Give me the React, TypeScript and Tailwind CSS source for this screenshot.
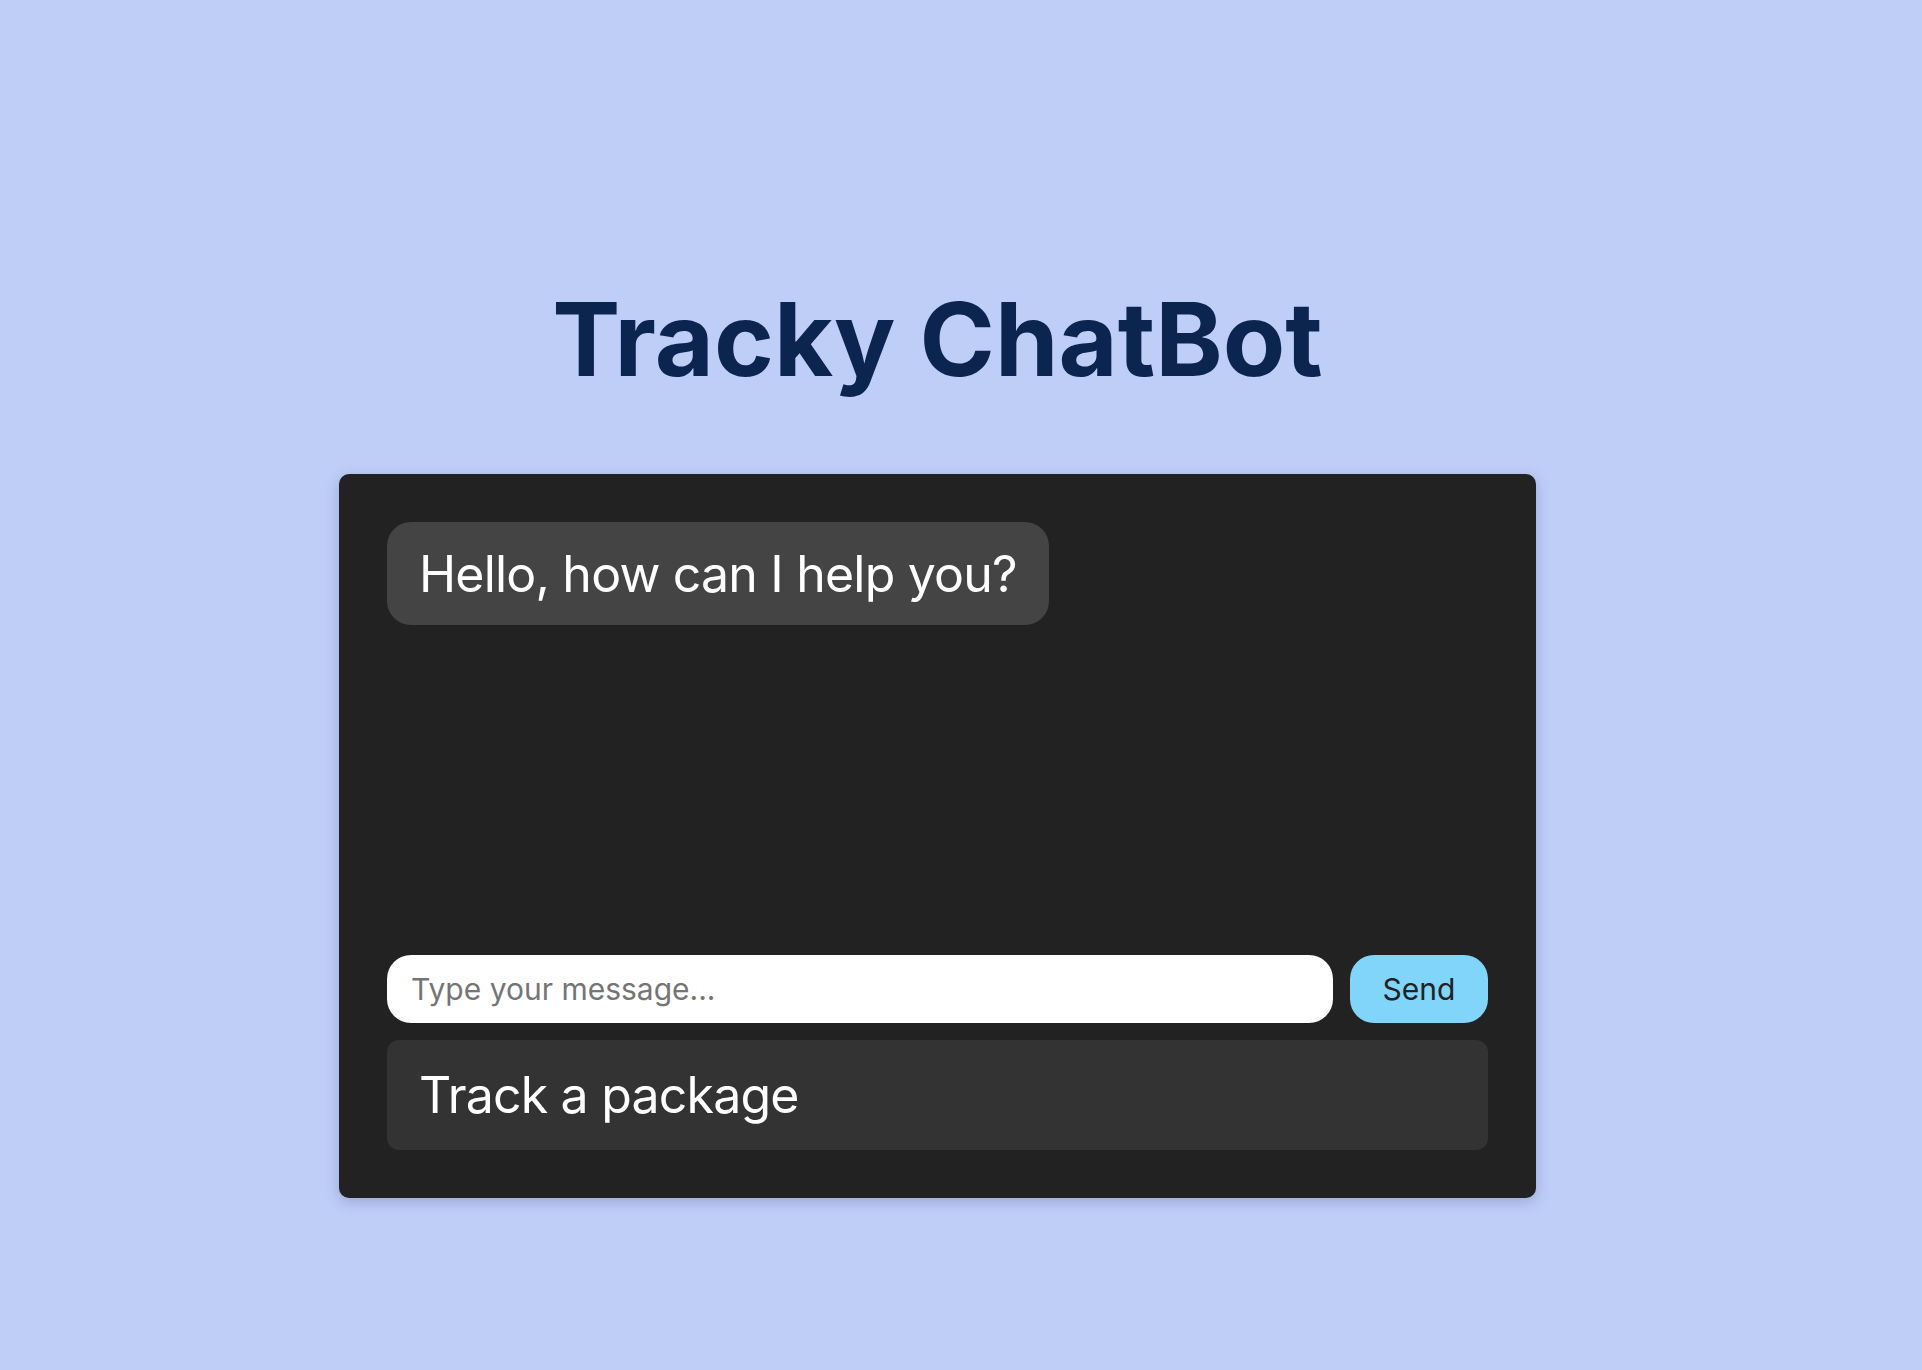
import React, { useState } from "react";

type Message = {
  id: number;
  text: string;
};

const initialMessages: Message[] = [{ id: 1, text: "Hello, how can I help you?" }];

const App: React.FC = () => {
  const [messages] = useState<Message[]>(initialMessages);
  const [input, setInput] = useState("");

  return (
    <div
      className="min-h-screen w-full bg-[#bfcef7] flex flex-col items-center pt-[288px] pr-[47px]"
      style={{ fontFamily: "Inter, 'Noto Sans', sans-serif" }}
    >
      <h1 className="text-[102px] leading-none font-bold text-[#0c2550] mb-[84px]">
        Tracky ChatBot
      </h1>

      <div className="w-[1197px] h-[724px] bg-[#222222] rounded-[10px] p-12 flex flex-col shadow-[0_4px_14px_rgba(40,60,120,0.25)]">
        <div className="flex-1 flex flex-col items-start">
          {messages.map((m) => (
            <div
              key={m.id}
              className="h-[103px] flex items-center px-8 rounded-3xl bg-[#444444] text-white text-[50px] leading-none tracking-[-0.016em]"
            >
              {m.text}
            </div>
          ))}
        </div>

        <div className="flex items-center gap-[17px]">
          <input
            type="text"
            value={input}
            onChange={(e) => setInput(e.target.value)}
            placeholder="Type your message..."
            className="flex-1 h-[68px] rounded-3xl bg-white pl-6 text-[30px] text-[#222] placeholder:text-[#757575] outline-none"
          />
          <button className="w-[138px] h-[68px] rounded-3xl bg-[#81d4fa] text-[30px] text-[#222222]">
            Send
          </button>
        </div>

        <div className="mt-[17px] h-[110px] flex items-center px-8 rounded-xl bg-[#333333] text-white text-[50px] leading-none tracking-[-0.016em]">
          Track a package
        </div>
      </div>
    </div>
  );
};

export default App;
